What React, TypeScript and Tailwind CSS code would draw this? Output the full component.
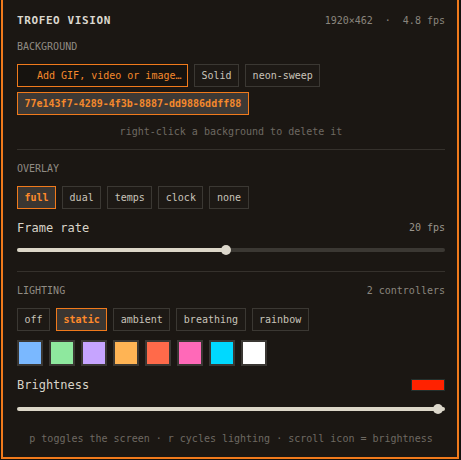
import { useState } from 'react'

const bgOptions = ['Solid', 'neon-sweep']
const overlays = ['full', 'dual', 'temps', 'clock', 'none']
const modes = ['off', 'static', 'ambient', 'breathing', 'rainbow']
const swatches = [
  '#7ab8ff',
  '#8ee89e',
  '#c6a4ff',
  '#ffb454',
  '#ff6a4a',
  '#ff69b8',
  '#00d9ff',
  '#ffffff',
]

function Chip({
  label,
  active,
  onClick,
}: {
  label: string
  active?: boolean
  onClick?: () => void
}) {
  return (
    <button
      onClick={onClick}
      className={
        active
          ? 'h-[23px] px-[6.5px] whitespace-nowrap border border-[#f07a1c] bg-[#3a3632] text-[#ff8a2a] font-bold text-[10px] leading-none'
          : 'h-[23px] px-[6.5px] whitespace-nowrap border border-[#3b3833] bg-[#1d1915] text-[#c9c4ba] text-[10px] leading-none'
      }
    >
      {label}
    </button>
  )
}

function Slider({ pct, full }: { pct: number; full?: boolean }) {
  // thumb travels between r and width - r, like a native range input
  const left = `calc(7px + (100% - 14px) * ${pct / 100})`
  return (
    <div className="relative h-[10px] flex items-center">
      <div className="w-full h-[4px] rounded-full bg-[#3b3833] overflow-hidden">
        <div
          className="h-full bg-[#dcd7c8]"
          style={{ width: full ? '100%' : left }}
        />
      </div>
      <div
        className="absolute top-0 w-[10px] h-[10px] -ml-[5px] rounded-full bg-[#dcd7cb]"
        style={{ left }}
      />
    </div>
  )
}

export default function App() {
  const [overlay, setOverlay] = useState('full')
  const [mode, setMode] = useState('static')

  return (
    <div
      className="w-[461px] h-[460px] bg-[#13110e] overflow-hidden"
      style={{ fontFamily: '"DejaVu Sans Mono", "Liberation Mono", monospace' }}
    >
      <div className="ml-[1px] w-[458px] h-[459px] border-x-2 border-b-2 border-[#f07a1c] bg-[#1b1713] pl-[14px] pr-[12px] pt-[13px] flex flex-col">
        {/* header */}
        <div className="flex items-center justify-between leading-[16px]">
          <span className="text-[11px] font-bold tracking-[0.6px] text-[#dcd8cf]">
            TROFEO VISION
          </span>
          <span className="flex gap-3 text-[10px] text-[#8a857d]">
            <span>1920×462</span>
            <span>·</span>
            <span>4.8 fps</span>
          </span>
        </div>

        {/* background */}
        <div className="mt-[11px] text-[10px] leading-[14px] text-[#908b83]">
          BACKGROUND
        </div>
        <div className="mt-[10px] flex gap-[6px]">
          <button className="h-[23px] w-[171px] pl-[19px] pr-[4px] text-left whitespace-nowrap overflow-hidden border border-[#f07a1c] bg-[#16130f] text-[#f5892c] text-[10px] leading-none">
            Add GIF, video or image…
          </button>
          {bgOptions.map(o => (
            <Chip key={o} label={o} />
          ))}
        </div>
        <div className="mt-[5px] flex">
          <span className="h-[23px] px-[6.5px] flex items-center whitespace-nowrap border border-[#f07a1c] bg-[#3d3935] text-[#f5892c] text-[10px] font-semibold">
            77e143f7-4289-4f3b-8887-dd9886ddff88
          </span>
        </div>
        <div className="mt-[10px] text-center text-[10px] leading-[14px] text-[#6e6962]">
          right-click a background to delete it
        </div>

        <div className="mt-[10px] h-px bg-[#35312c]" />

        {/* overlay */}
        <div className="mt-[12px] text-[10px] leading-[14px] text-[#908b83]">
          OVERLAY
        </div>
        <div className="mt-[10px] flex gap-[6px]">
          {overlays.map(o => (
            <Chip
              key={o}
              label={o}
              active={overlay === o}
              onClick={() => setOverlay(o)}
            />
          ))}
        </div>
        <div className="mt-[11px] flex items-center justify-between leading-[16px]">
          <span className="text-[12px] text-[#d8d3c8]">Frame rate</span>
          <span className="text-[10px] text-[#9a958c]">20 fps</span>
        </div>
        <div className="mt-[9px]">
          <Slider pct={48.7} />
        </div>

        <div className="mt-[16px] h-px bg-[#35312c]" />

        {/* lighting */}
        <div className="mt-[12px] flex items-center justify-between text-[10px] leading-[14px]">
          <span className="text-[#908b83]">LIGHTING</span>
          <span className="text-[#8a857d]">2 controllers</span>
        </div>
        <div className="mt-[10px] flex gap-[6px]">
          {modes.map(m => (
            <Chip
              key={m}
              label={m}
              active={mode === m}
              onClick={() => setMode(m)}
            />
          ))}
        </div>
        <div className="mt-[9px] flex gap-[6px]">
          {swatches.map(c => (
            <button
              key={c}
              className="w-[26px] h-[26px] border-2 border-[#3a3733]"
              style={{ background: c }}
            />
          ))}
        </div>
        <div className="mt-[11px] flex items-center justify-between leading-[16px]">
          <span className="text-[12px] text-[#d8d3c8]">Brightness</span>
          <span className="w-[34px] h-[12px] border border-[#22302d] bg-[#ff2200]" />
        </div>
        <div className="mt-[11px]">
          <Slider pct={100} full />
        </div>

        <div className="mt-[18px] text-center text-[10px] leading-[14px] text-[#6e6962]">
          p toggles the screen · r cycles lighting · scroll icon = brightness
        </div>
      </div>
    </div>
  )
}
